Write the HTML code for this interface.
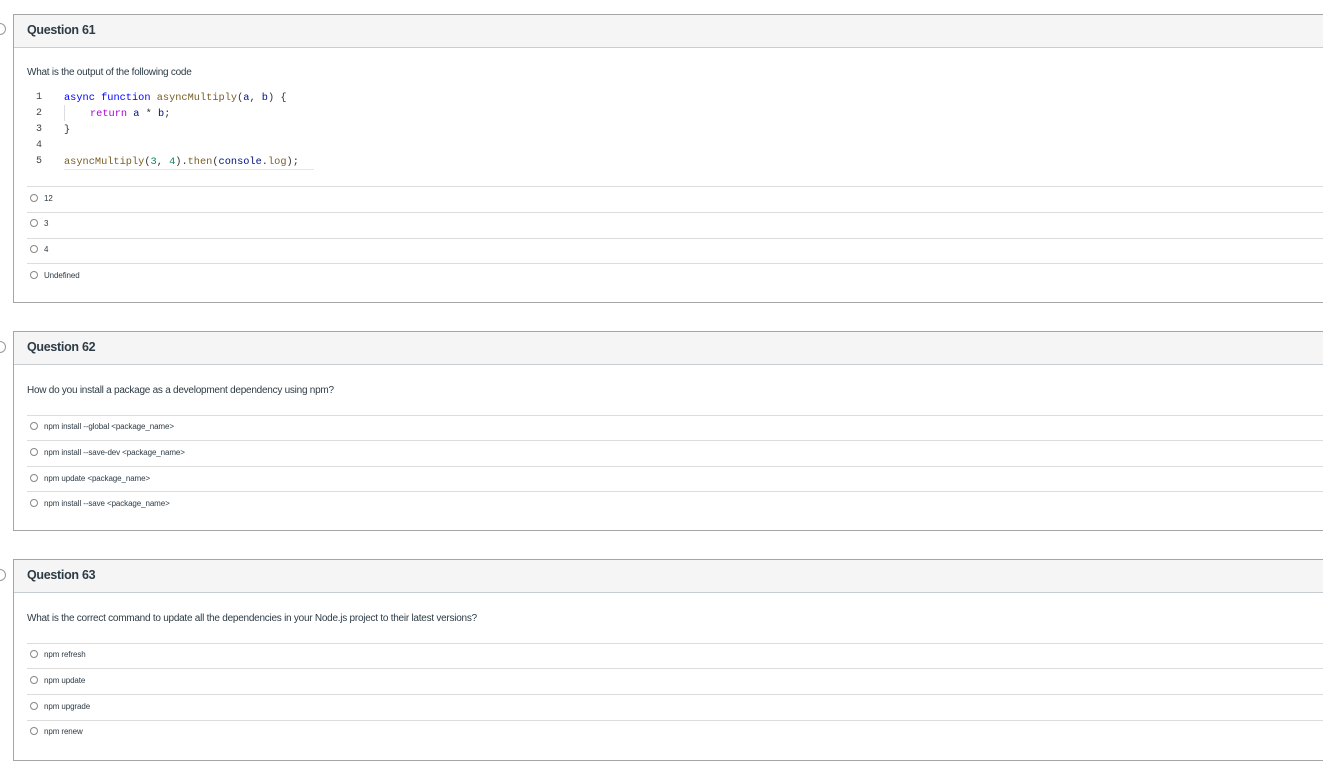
<!DOCTYPE html>
<html><head><meta charset="utf-8"><style>
body{margin:0;width:1323px;height:774px;background:#fff;position:relative;overflow:hidden;font-family:"Liberation Sans",sans-serif;color:#2d3b45}
.a{position:absolute}
.box{position:absolute;left:13px;width:1320px;border:1px solid #a5a5a5;box-sizing:border-box}
.hdr{position:absolute;left:0;right:0;top:0;height:32px;background:#f5f5f5;border-bottom:1px solid #c7cdd1}
.title{position:absolute;left:13px;top:8px;font-size:12.5px;font-weight:bold;color:#2d3b45;letter-spacing:-0.3px}
.q{font-size:10px;color:#2d3b45;white-space:nowrap;letter-spacing:-0.25px}
.line{position:absolute;left:27px;width:1296px;height:1px;background:#dcdcdc}
.opt{position:absolute;left:30px;font-size:8px;color:#2d3b45;white-space:nowrap;line-height:10px;letter-spacing:-0.1px}
.opt:before{content:"";display:inline-block;width:6px;height:6px;border:1px solid #888;border-radius:50%;vertical-align:-1px;margin-right:6px}
.arr{position:absolute;left:-6px;width:10px;height:10px;border:1px solid #999;border-radius:50%;background:#fff}
.code{font-family:"Liberation Mono",monospace;font-size:10.3px;white-space:pre;color:#333}
.ln{font-family:"Liberation Mono",monospace;font-size:10px;color:#444}
.k{color:#0000ff}.f{color:#795e26}.r{color:#af00db}.n{color:#098658}.v{color:#001080}
</style></head><body>

<div class="arr" style="top:23px"></div>
<div class="box" style="top:14px;height:289px"><div class="hdr"><div class="title">Question 61</div></div></div>
<div class="a q" style="left:27px;top:67px">What is the output of the following code</div>
<div class="a ln" style="left:36px;top:92px">1</div>
<div class="a ln" style="left:36px;top:108px">2</div>
<div class="a ln" style="left:36px;top:124px">3</div>
<div class="a ln" style="left:36px;top:140px">4</div>
<div class="a ln" style="left:36px;top:156px">5</div>
<div class="a" style="left:64px;top:105px;width:1px;height:16px;background:#ddd"></div>
<div class="a code" style="left:64px;top:92px"><span class="k">async</span> <span class="k">function</span> <span class="f">asyncMultiply</span>(<span class="v">a</span>, <span class="v">b</span>) {</div>
<div class="a code" style="left:90px;top:108px"><span class="r">return</span> <span class="v">a</span> * <span class="v">b</span>;</div>
<div class="a code" style="left:64px;top:124px">}</div>
<div class="a code" style="left:64px;top:156px"><span class="f">asyncMultiply</span>(<span class="n">3</span>, <span class="n">4</span>).<span class="f">then</span>(<span class="v">console</span>.<span class="f">log</span>);</div>
<div class="a" style="left:64px;top:169px;width:250px;height:1px;background:#e5e5e5"></div>
<div class="line" style="top:186px"></div>
<div class="opt" style="top:194px">12</div>
<div class="line" style="top:212px"></div>
<div class="opt" style="top:219px">3</div>
<div class="line" style="top:238px"></div>
<div class="opt" style="top:245px">4</div>
<div class="line" style="top:263px"></div>
<div class="opt" style="top:271px">Undefined</div>

<div class="arr" style="top:341px"></div>
<div class="box" style="top:331px;height:200px"><div class="hdr"><div class="title">Question 62</div></div></div>
<div class="a q" style="left:27px;top:385px">How do you install a package as a development dependency using npm?</div>
<div class="line" style="top:415px"></div>
<div class="opt" style="top:422px">npm install --global &lt;package_name&gt;</div>
<div class="line" style="top:440px"></div>
<div class="opt" style="top:448px">npm install --save-dev &lt;package_name&gt;</div>
<div class="line" style="top:466px"></div>
<div class="opt" style="top:474px">npm update &lt;package_name&gt;</div>
<div class="line" style="top:491px"></div>
<div class="opt" style="top:499px">npm install --save &lt;package_name&gt;</div>

<div class="arr" style="top:569px"></div>
<div class="box" style="top:559px;height:202px"><div class="hdr"><div class="title">Question 63</div></div></div>
<div class="a q" style="left:27px;top:613px">What is the correct command to update all the dependencies in your Node.js project to their latest versions?</div>
<div class="line" style="top:643px"></div>
<div class="opt" style="top:650px">npm refresh</div>
<div class="line" style="top:668px"></div>
<div class="opt" style="top:676px">npm update</div>
<div class="line" style="top:694px"></div>
<div class="opt" style="top:702px">npm upgrade</div>
<div class="line" style="top:720px"></div>
<div class="opt" style="top:727px">npm renew</div>

</body></html>
